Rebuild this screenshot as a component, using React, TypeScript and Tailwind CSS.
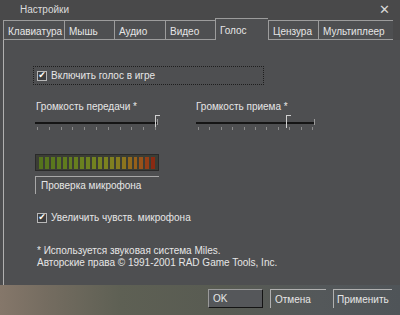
import React from "react";

const font = { fontFamily: '"Liberation Sans", "DejaVu Sans", Arial, sans-serif' };

const tabs = [
  { label: "Клавиатура", w: "w-[61px]" },
  { label: "Мышь", w: "w-[50px]" },
  { label: "Аудио", w: "w-[51px]" },
  { label: "Видео", w: "w-[50px]" },
  { label: "Голос", w: "w-[53px]", active: true },
  { label: "Цензура", w: "w-[50px]" },
  { label: "Мультиплеер", w: "w-[75px]" },
];

const meterColors = [
  "#55731c", "#58761d", "#5a781d", "#5d7a1e", "#607c1e", "#637d1f", "#667e1f",
  "#6a801f", "#6e8120", "#728220", "#768220", "#7b8220", "#808020", "#867c1f",
  "#8c751e", "#92691c", "#96601a", "#98521a", "#953e16", "#8a2a12",
];

function Check({ label }: { label: string }) {
  return (
    <div className="flex items-center gap-[4px]">
      <div className="w-[10px] h-[10px] border border-[#b8b8b8] bg-[#3d3e40] flex items-center justify-center text-[9px] leading-none text-white">
        ✔
      </div>
      <span>{label}</span>
    </div>
  );
}

function Slider({ width, thumb }: { width: number; thumb: number }) {
  const ticks = Array.from({ length: 11 });
  return (
    <div className="relative h-[16px]" style={{ width }}>
      <div className="absolute left-0 right-0 top-[7px] h-[2px] bg-[#151515]" />
      <div className="absolute right-0 top-[4px] w-[1px] h-[6px] bg-[#9a9a9a]" />
      <div className="absolute top-0 w-[5px] h-[13px] border-l border-t border-[#d0d0d0]" style={{ left: thumb }} />
      <div className="absolute left-[2px] right-[2px] top-[12px] flex justify-between">
        {ticks.map((_, i) => (
          <div key={i} className="w-[1px] h-[3px] bg-[#8a8a8a]" />
        ))}
      </div>
    </div>
  );
}

export default function App() {
  return (
    <div
      className="w-[400px] h-[315px] overflow-hidden flex flex-col text-[10px] text-[#e6e6e6]"
      style={{
        ...font,
        background:
          "linear-gradient(90deg, #85776a 0%, #746c60 12%, #5e6054 30%, #585b52 55%, #54585a 80%, #4f5458 100%)",
      }}
    >
      <div className="bg-[#4c4d4f]">
        {/* title */}
        <div className="h-[18px] flex items-center justify-between pl-[20px] pr-[10px] bg-[#49494a]">
          <span className="text-[#dcdcdc]">Настройки</span>
          <span className="text-[13px] font-bold text-[#d8d8d8] leading-none">✕</span>
        </div>

        {/* tabs */}
        <div className="h-[22px] pl-[3px] flex items-end bg-[#49494a]">
          {tabs.map((t) =>
            t.active ? (
              <div
                key={t.label}
                className={`${t.w} h-[22px] border-t border-l border-[#9c9c9c] bg-[#4e4f51] pl-[4px] pt-[4px]`}
              >
                {t.label}
              </div>
            ) : (
              <div
                key={t.label}
                className={`${t.w} h-[20px] border-t border-l border-b border-[#9c9c9c] bg-[#4e4f51] pl-[4px] pt-[3px]`}
              >
                {t.label}
              </div>
            )
          )}
        </div>

        {/* panel */}
        <div className="h-[245px] ml-[3px] border-l border-[#b0b0b0] bg-[#4e4f51] flex flex-col pl-[31px]">
          <div className="mt-[26px] ml-[-2px] w-[231px] h-[19px] border border-dotted border-[#1e1e1e] flex items-center pl-[3px]">
            <Check label="Включить голос в игре" />
          </div>

          <div className="mt-[14px] flex">
            <div className="w-[161px] flex flex-col">
              <span className="pl-[1px]">Громкость передачи *</span>
              <div className="mt-[1px]">
                <Slider width={123} thumb={120} />
              </div>
            </div>
            <div className="flex flex-col">
              <span>Громкость приема *</span>
              <div className="mt-[1px]">
                <Slider width={119} thumb={90} />
              </div>
            </div>
          </div>

          <div className="mt-[23px] w-[124px] h-[17px] border border-[#2a2a2a] bg-[#3b3d35] flex items-center gap-[2px] px-[3px]">
            {meterColors.map((c, i) => (
              <div key={i} className="w-[4px] h-[12px]" style={{ background: c }} />
            ))}
          </div>

          <div className="mt-[5px] w-[124px] h-[18px] border-t border-l border-[#a8a8a8] flex items-center pl-[5px]">
            Проверка микрофона
          </div>

          <div className="mt-[16px] pl-[2px]">
            <Check label="Увеличить чувств. микрофона" />
          </div>

          <div className="mt-[20px] pl-[2px] leading-[12px]">
            <div>* Используется звуковая система Miles.</div>
            <div>Авторские права © 1991-2001 RAD Game Tools, Inc.</div>
          </div>
        </div>
      </div>

      {/* buttons */}
      <div className="flex justify-end pt-[4px] pr-[8px] gap-[7px]">
        <div className="w-[55px] h-[19px] border border-t-[#9a9a9a] border-l-[#9a9a9a] border-r-[#141414] border-b-[#141414] bg-[#55575a] pl-[4px] flex items-center">
          OK
        </div>
        <div className="w-[56px] h-[19px] border-t border-l border-[#b0b0b0] pl-[4px] flex items-center">
          Отмена
        </div>
        <div className="w-[59px] h-[19px] border-t border-l border-[#b0b0b0] pl-[3px] flex items-center">
          Применить
        </div>
      </div>
    </div>
  );
}
